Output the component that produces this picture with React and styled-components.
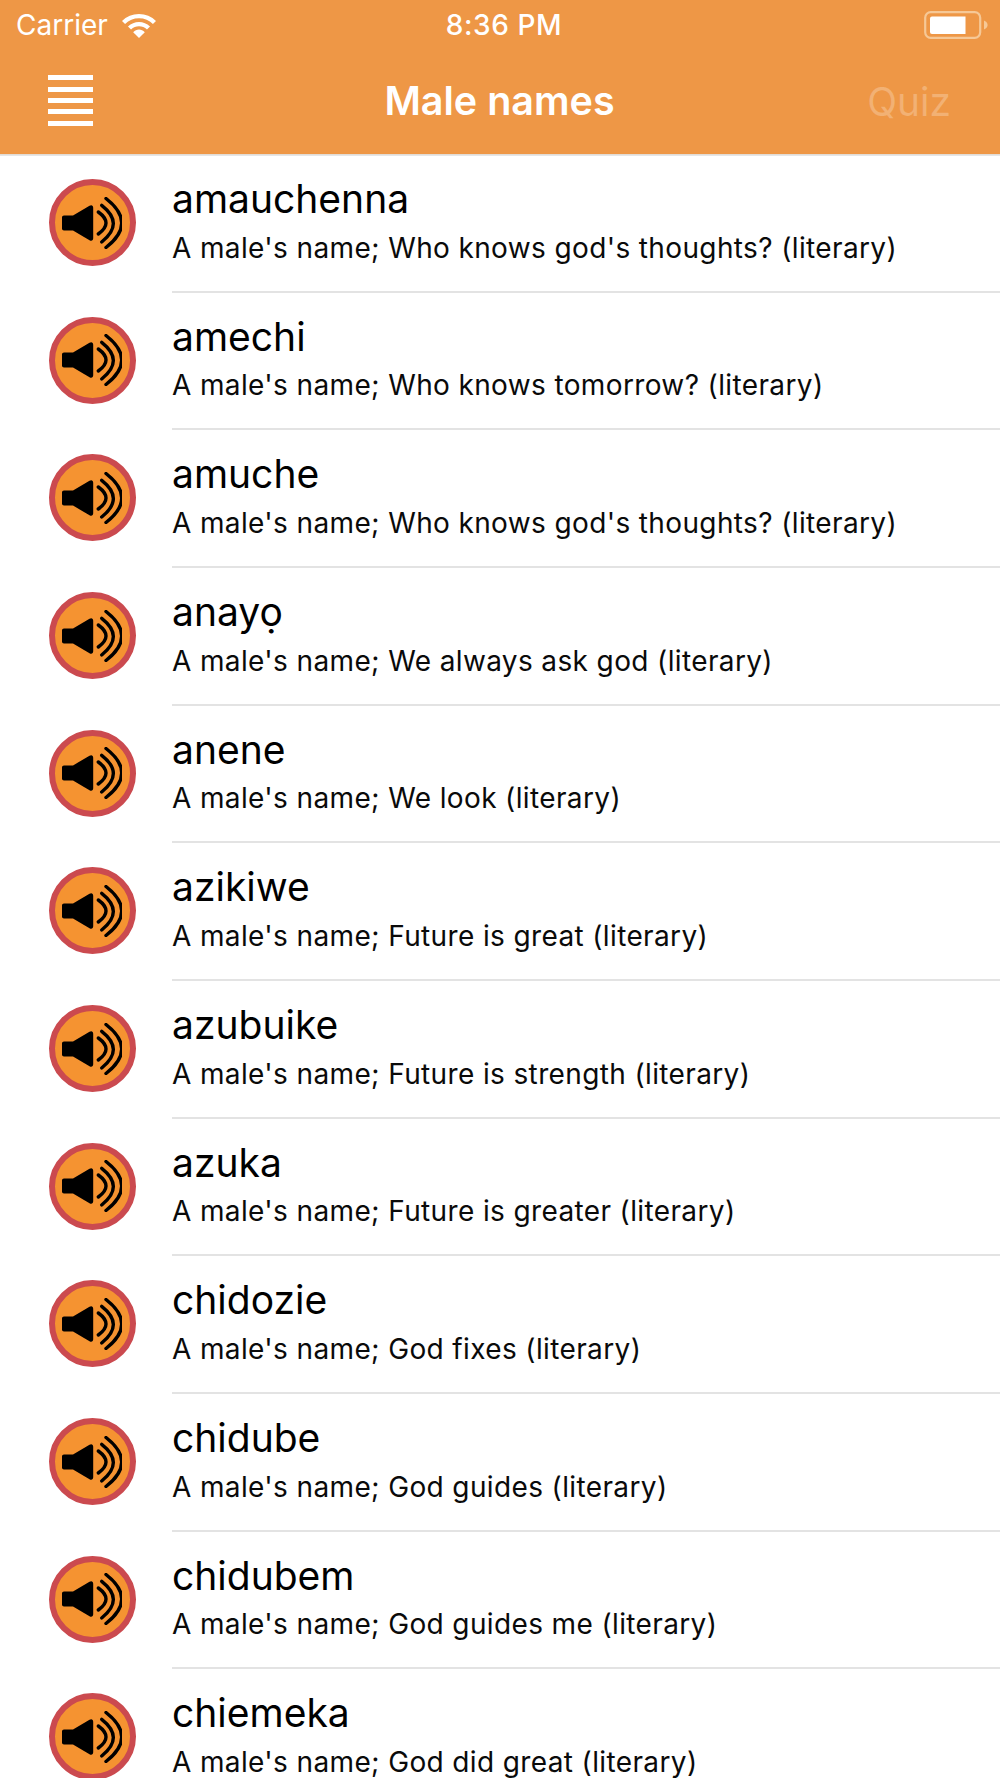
import React from 'react';
import styled, { createGlobalStyle } from 'styled-components';

const Global = createGlobalStyle`
  html, body { margin: 0; padding: 0; background: #fff; }
  body { font-family: Inter, "Noto Sans", sans-serif; overflow: hidden; }
`;

const Screen = styled.div`
  width: 1000px;
  height: 1778px;
  overflow: hidden;
  display: flex;
  flex-direction: column;
`;

const Header = styled.header`
  flex: none;
  height: 155px;
  box-sizing: border-box;
  background: #ee9746;
  border-bottom: 1px solid #e2dcd5;
  box-shadow: 0 1px 0 #e6e6e6;
  color: #fff;
  display: flex;
  flex-direction: column;
`;

const StatusBar = styled.div`
  height: 50px;
  padding: 0 12px 0 16px;
  display: grid;
  grid-template-columns: 1fr auto 1fr;
  align-items: center;
  font-size: 28px;
`;

const Carrier = styled.div`
  display: flex;
  align-items: center;
  gap: 14px;
`;

const Clock = styled.div`
  font-weight: 500;
  letter-spacing: 0.6px;
  margin-left: 4px;
`;

const BatteryWrap = styled.div`
  justify-self: end;
  display: flex;
`;

const NavBar = styled.div`
  flex: 1;
  display: grid;
  grid-template-columns: 1fr auto 1fr;
  align-items: center;
  padding: 0 49px 0 48px;
  margin-top: -3px;
`;

const MenuButton = styled.div`
  width: 45px;
  display: flex;
  flex-direction: column;
  gap: 6.3px;
`;

const MenuLine = styled.span`
  display: block;
  height: 5px;
  background: #fff;
`;

const Title = styled.h1`
  margin: 1px 0 0;
  font-size: 39.5px;
  font-weight: 600;
`;

const Quiz = styled.div`
  justify-self: end;
  margin-top: 1px;
  font-size: 39px;
  color: rgba(255, 255, 255, 0.25);
`;

const List = styled.div`
  flex: 1;
  overflow: hidden;
`;

const Row = styled.div`
  height: 137.68px;
  box-sizing: border-box;
  display: flex;
  align-items: stretch;
  padding-left: 48.5px;
`;

const Badge = styled.div`
  flex: none;
  width: 87px;
  height: 87px;
  margin-top: 24px;
  margin-right: 36.5px;
  box-sizing: border-box;
  border-radius: 50%;
  border: 6px solid #cb4a4f;
  background: #f59331;
  display: flex;
  align-items: center;
  justify-content: center;
`;

const RowBody = styled.div`
  flex: 1;
  min-width: 0;
  box-sizing: border-box;
  border-bottom: 2px solid #e3e3e3;
  padding-top: 20px;
`;

const Name = styled.div`
  font-size: 39px;
  line-height: 47px;
  color: #000;
`;

const Meaning = styled.div`
  margin-top: 7.5px;
  font-size: 28px;
  line-height: 36px;
  letter-spacing: 0.37px;
  color: #0a0a0a;
  white-space: nowrap;
`;

const Wifi = () => (
  <svg width="34" height="25" viewBox="0 0 34 25" fill="none">
    <path d="M1.5 9.5C10 1 24 1 32.5 9.5" stroke="#fff" strokeWidth="4.4" />
    <path d="M7.5 15C13 9.8 21 9.8 26.5 15" stroke="#fff" strokeWidth="4.4" />
    <path d="M11.2 19.2C14.6 15.6 19.4 15.6 22.8 19.2L17 25Z" fill="#fff" />
  </svg>
);

const Battery = () => (
  <svg width="64" height="28" viewBox="0 0 64 28" fill="none">
    <rect x="1.2" y="1.2" width="55" height="25.6" rx="5.5" stroke="#f6c896" strokeWidth="2.2" />
    <path d="M6 7.5a2 2 0 0 1 2-2H41.5V23H8a2 2 0 0 1-2-2Z" fill="#fff" />
    <path d="M60 9.5c2.6 1 3.6 3 3.6 4.5S62.6 17.5 60 18.5Z" fill="#f6c896" />
  </svg>
);

const Speaker = () => (
  <svg width="60" height="52" viewBox="0 0 60 52" fill="none">
    <path
      d="M2 18.4H11L27.5 8.8C29.6 7.6 31.2 8.6 31.2 10.8V41.2C31.2 43.4 29.6 44.4 27.5 43.2L11 33.6H2C.8 33.6 0 32.8 0 31.6V20.4C0 19.2 .8 18.4 2 18.4Z"
      fill="#000"
    />
    <path d="M36.3 15Q51.7 26 36.3 37" stroke="#000" strokeWidth="3.4" strokeLinecap="round" />
    <path d="M39.7 8.3Q63 26.5 39.7 45" stroke="#000" strokeWidth="3.4" strokeLinecap="round" />
    <path d="M44 1.5Q75.4 26 44 50.5" stroke="#000" strokeWidth="3.4" strokeLinecap="round" />
  </svg>
);

const names = [
  ['amauchenna', "A male's name; Who knows god's thoughts? (literary)"],
  ['amechi', "A male's name; Who knows tomorrow? (literary)"],
  ['amuche', "A male's name; Who knows god's thoughts? (literary)"],
  ['anayọ', "A male's name; We always ask god (literary)"],
  ['anene', "A male's name; We look (literary)"],
  ['azikiwe', "A male's name; Future is great (literary)"],
  ['azubuike', "A male's name; Future is strength (literary)"],
  ['azuka', "A male's name; Future is greater (literary)"],
  ['chidozie', "A male's name; God fixes (literary)"],
  ['chidube', "A male's name; God guides (literary)"],
  ['chidubem', "A male's name; God guides me (literary)"],
  ['chiemeka', "A male's name; God did great (literary)"],
];

export default function App() {
  return (
    <Screen>
      <Global />
      <Header>
        <StatusBar>
          <Carrier>
            Carrier
            <Wifi />
          </Carrier>
          <Clock>8:36 PM</Clock>
          <BatteryWrap>
            <Battery />
          </BatteryWrap>
        </StatusBar>
        <NavBar>
          <MenuButton>
            {[0, 1, 2, 3, 4].map((i) => (
              <MenuLine key={i} />
            ))}
          </MenuButton>
          <Title>Male names</Title>
          <Quiz>Quiz</Quiz>
        </NavBar>
      </Header>
      <List>
        {names.map(([name, meaning]) => (
          <Row key={name}>
            <Badge>
              <Speaker />
            </Badge>
            <RowBody>
              <Name>{name}</Name>
              <Meaning>{meaning}</Meaning>
            </RowBody>
          </Row>
        ))}
      </List>
    </Screen>
  );
}
